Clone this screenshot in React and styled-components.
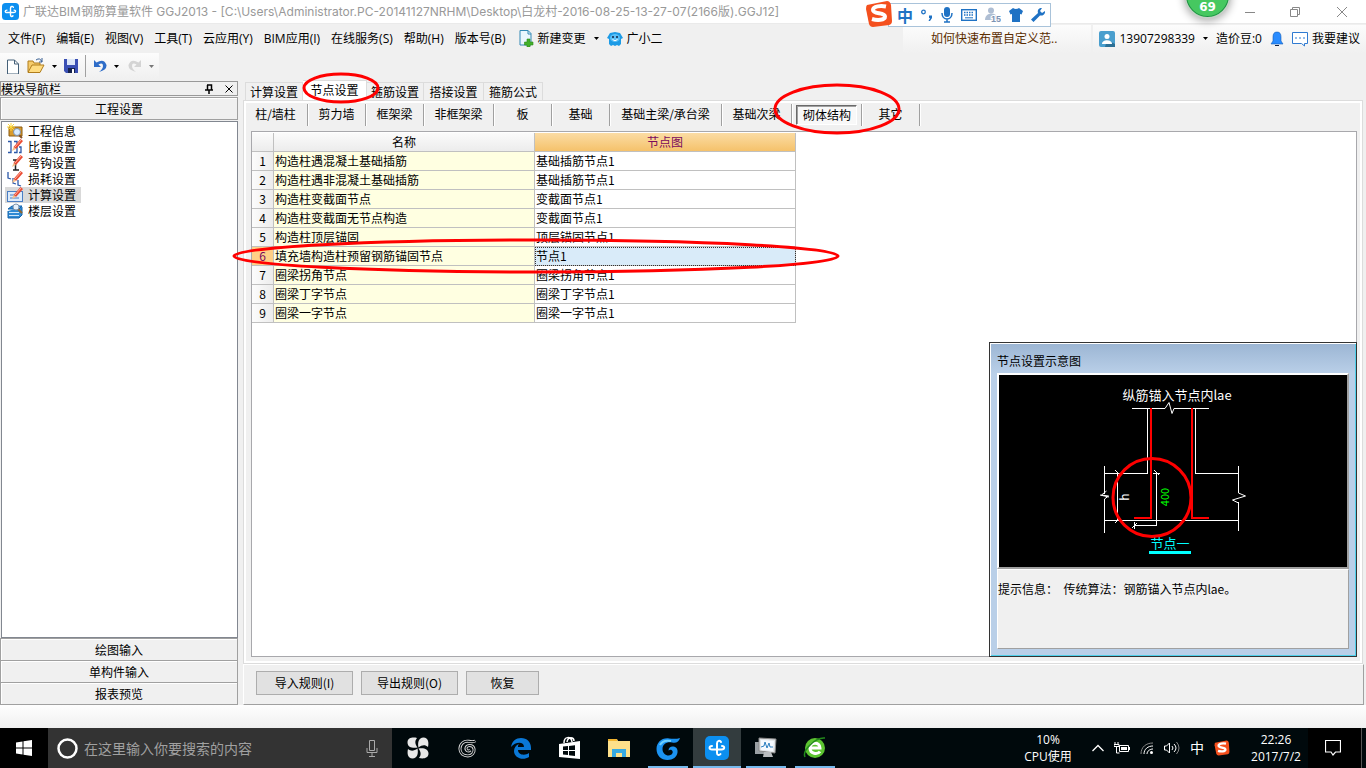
import React from "react";
import styled, { createGlobalStyle, css } from "styled-components";

const SONG = '"Noto Sans CJK SC", "Liberation Sans", sans-serif';
const UI = '"Open Sans", "Noto Sans CJK SC", sans-serif';

const Global = createGlobalStyle`
  *, *::before, *::after { box-sizing: border-box; }
  body { margin: 0; background: #f0f0f0; font: 12px/16px ${SONG}; color: #000; }
  button, input { font: inherit; color: inherit; margin: 0; padding: 0; border: 0; background: none; border-radius: 0; white-space: nowrap; }
  svg { display: block; flex: none; }
`;

const Page = styled.div`
  position: relative;
  display: flex;
  flex-direction: column;
  min-height: 100vh;
  overflow: hidden;
`;

/* ---------- title bar ---------- */
const TitleBar = styled.header`
  display: flex;
  align-items: center;
  height: 23px;
  padding: 0 18px 0 2px;
  background: #fff;
`;
const Title = styled.h1`
  flex: 1;
  margin: 0 0 0 4px;
  font-family: Inter, "Noto Sans CJK SC", sans-serif;
  font-size: 12px;
  font-weight: 400;
  line-height: 20px;
  color: #999;
  white-space: nowrap;
`;
const WindowButtons = styled.div`
  display: flex;
  gap: 30px;
`;
const IconButton = styled.button`
  display: flex;
  align-items: center;
  justify-content: center;
  gap: 4px;
`;
const Ball = styled.div`
  position: absolute;
  top: -28px;
  right: 135px;
  width: 47px;
  height: 47px;
  padding-top: 25px;
  border: 2px solid #c9cfc9;
  border-radius: 50%;
  background: #46c860;
  box-shadow: inset 0 0 0 1px #1f8f45, 0 2px 8px #0005;
  color: #fff;
  font: bold 12px/16px "DejaVu Sans", sans-serif;
  text-align: center;
`;
const ImeBar = styled.div`
  position: absolute;
  top: 3px;
  right: 315px;
  display: flex;
  align-items: center;
  gap: 8px;
  height: 24px;
  padding: 0 5px 0 8px;
  border: 1px solid #a9c3da;
  background: #fff;
  color: #1f72c4;
  font-size: 16px;
  font-weight: 700;
`;
const ImeLogo = styled.div`
  position: absolute;
  left: -24px;
  top: -4px;
`;

/* ---------- menu and tool bar ---------- */
const MenuBar = styled.nav`
  display: flex;
  align-items: center;
  height: 30px;
  padding-left: 8px;
  border-top: 1px solid #eaeaea;
  font-family: ${UI};
`;
const MenuItems = styled.div`
  display: flex;
  align-items: center;
  gap: 11px;
`;
const MenuExtras = styled.div`
  display: flex;
  flex: 1;
  align-items: center;
  gap: 8px;
  margin-left: 13px;
`;
const AccountStrip = styled.div`
  display: flex;
  align-items: center;
  justify-content: ${(p) => (p.$end ? "flex-end" : "flex-start")};
  gap: 8px;
  width: ${(p) => p.$w}px;
  height: 28px;
  padding: 0 6px;
  margin-left: 2px;
  background: linear-gradient(#fcfcfc, #f0f0f0);
`;
const HelpLink = styled.a`
  margin-left: 22px;
  color: #5b2e00;
  text-decoration: none;
`;
const ToolBar = styled.div`
  display: flex;
  align-items: center;
  align-self: flex-start;
  gap: 7px;
  height: 26px;
  padding: 0 5px;
  background: linear-gradient(#fcfcfc, #f0f0f0);
`;
const Divider = styled.span`
  width: 1px;
  height: 22px;
  background: #a0a0a0;
`;

/* ---------- left panel ---------- */
const Main = styled.main`
  display: flex;
  flex: 1;
  gap: 5px;
  padding-right: 2px;
`;
const Side = styled.aside`
  display: flex;
  flex-direction: column;
  width: 238px;
  padding-top: 2px;
`;
const SideHeader = styled.div`
  display: flex;
  align-items: center;
  justify-content: space-between;
  height: 15px;
  padding-right: 4px;
  margin-bottom: 1px;
  border: 1px solid #999;
`;
const SideTools = styled.div`
  display: flex;
  gap: 12px;
`;
const SideButton = styled.button`
  height: ${(p) => (p.$last ? 23 : 22)}px;
  border: 1px solid #a0a0a0;
  border-bottom-width: ${(p) => (p.$last ? 1 : 0)}px;
  box-shadow: inset 1px 1px #fff;
`;
const Tree = styled.ul`
  flex: 1;
  margin: 1px 0 0 1px;
  padding: 1px 3px;
  list-style: none;
  border: 1px solid #828790;
  background: #fff;
`;
const TreeItem = styled.li`
  display: flex;
  align-items: center;
  gap: 5px;
  width: 76px;
  height: 16px;
  padding-left: 2px;
  background: ${(p) => (p.$on ? "#d9d9d9" : "none")};
`;

/* ---------- work area ---------- */
const Work = styled.section`
  position: relative;
  display: flex;
  flex: 1;
  flex-direction: column;
  min-width: 0;
`;
const Tabs = styled.div`
  display: flex;
  align-items: flex-end;
  height: 21px;
  padding-left: 2px;
`;
const Tab = styled.button`
  width: ${(p) => p.$w}px;
  height: ${(p) => (p.$on ? 20 : 18)}px;
  padding-bottom: ${(p) => (p.$on ? 2 : 0)}px;
  border: 1px solid #dcdcdc;
  border-bottom: 0;
  border-left-width: 0;
  background: ${(p) => (p.$on ? "#fff" : "#f0f0f0")};
  &:first-child { border-left-width: 1px; }
`;
const Panel = styled.div`
  display: flex;
  flex: 1;
  flex-direction: column;
  margin-right: 1px;
  border: 1px solid #dcdcdc;
  background: #f0f0f0;
  box-shadow: inset 0 0 0 2px #fff;
  padding: 3px 5px 6px 7px;
`;
const SubTabs = styled.div`
  display: flex;
  height: 22px;
  margin: 0 0 5px -7px;
`;
const SubTab = styled.div`
  display: flex;
  width: ${(p) => p.$w}px;
  padding: 1px 4px 0;
  border-right: 1px solid #a0a0a0;
  box-shadow: 1px 0 #fff;
`;
const SubTabButton = styled.button`
  flex: 1;
  height: 20px;
  padding-bottom: 2px;
  ${(p) =>
    p.$on &&
    css`
      padding: 0 0 0 1px;
      border: 1px solid;
      border-color: #696969 #fff #fff #696969;
      background: #f8f8f8;
      box-shadow: inset 1px 1px #a0a0a0;
    `}
`;
const Sheet = styled.div`
  position: relative;
  flex: 1;
  padding-top: 1px;
  border: 1px solid #a8a8ac;
  background: #fff;
`;
const Grid = styled.table`
  width: 544px;
  table-layout: fixed;
  border-collapse: separate;
  border-spacing: 0;
`;
const Th = styled.th`
  height: 19px;
  padding: 0;
  line-height: 16px;
  font-weight: 400;
  border-right: 1px solid #c0c0c0;
  border-bottom: 1px solid #c0c0c0;
  background: ${(p) => (p.$on ? "linear-gradient(#fbdca4, #f5c26b)" : "linear-gradient(#fbfbfb, #ececec)")};
  color: ${(p) => (p.$on ? "#7a0a5c" : "#000")};
`;
const RowTh = styled(Th)`
  background: ${(p) => (p.$on ? "#ffcf86" : "linear-gradient(90deg, #fcfcfc, #ececec)")};
`;
const Td = styled.td`
  height: 19px;
  padding: 0 1px;
  line-height: 16px;
  border-right: 1px solid #c0c0c0;
  border-bottom: 1px solid #c0c0c0;
  background: ${(p) => (p.$name ? "#ffffe1" : p.$on ? "#d9ebf9" : "#fff")};
  ${(p) => p.$on && css`outline: 1px dotted #333; outline-offset: -1px;`}
`;
const Footer = styled.div`
  display: flex;
  align-items: flex-start;
  gap: 8px;
  height: 41px;
  padding: 6px 12px;
  border: 1px solid;
  border-color: #fff #a0a0a0 #a0a0a0 #fff;
`;
const PushButton = styled.button`
  width: ${(p) => p.$w}px;
  height: 24px;
  border: 1px solid #adadad;
  background: #e1e1e1;
`;
const Marks = styled.svg`
  position: absolute;
  left: 0;
  top: 0;
  overflow: visible;
  pointer-events: none;
`;

/* ---------- floating diagram window ---------- */
const Float = styled.section`
  position: absolute;
  right: -1px;
  bottom: -1px;
  display: flex;
  flex-direction: column;
  width: 368px;
  height: 315px;
  padding: 7px;
  border: 1px solid #333;
  background: linear-gradient(#9bb5d3, #b9cfe8 30px);
  box-shadow: inset 1px 1px #fff, inset -1px -1px #4fd0ea;
`;
const FloatTitle = styled.h2`
  margin: 3px 0 4px;
  font-size: 12px;
  font-weight: 400;
  line-height: 16px;
`;
const Canvas = styled.div`
  height: 196px;
  border: 2px solid;
  border-color: #fff #a0a0a0 #a0a0a0 #fff;
  background: #000;
`;
const Hint = styled.p`
  flex: 1;
  margin: 0;
  padding: 11px 0;
  border: 1px solid;
  border-color: #fff #a0a0a0 #a0a0a0 #fff;
  background: #f0f0f0;
  white-space: pre;
`;

/* ---------- task bar ---------- */
const StatusBar = styled.div`
  height: 23px;
  background: linear-gradient(#fefefe, #f0f0f0);
`;
const TaskBar = styled.footer`
  display: flex;
  height: 40px;
  background: #00090c;
  color: #fff;
  font-family: ${UI};
`;
const StartButton = styled.button`
  display: flex;
  align-items: center;
  justify-content: center;
  width: 48px;
  background: #000;
`;
const Search = styled.label`
  display: flex;
  align-items: center;
  gap: 5px;
  width: 344px;
  padding: 0 14px 0 8px;
  background: #333;
`;
const SearchInput = styled.input`
  flex: 1;
  min-width: 0;
  height: 24px;
  font-size: 14px;
  outline: 0;
  &::placeholder { color: #a0a0a0; opacity: 1; }
`;
const Apps = styled.div`
  display: flex;
  flex: 1;
  gap: 1px;
  padding-left: 2px;
`;
const TaskButton = styled.button`
  display: flex;
  align-items: center;
  justify-content: center;
  width: 48px;
  margin-left: ${(p) => (p.$gap ? 5 : 0)}px;
  background: ${(p) =>
    p.$state === "active"
      ? "linear-gradient(#76b9ed, #76b9ed) bottom / 100% 2px no-repeat #333c3e"
      : p.$state === "open"
        ? "linear-gradient(#76b9ed, #76b9ed) bottom / 40px 2px no-repeat"
        : "none"};
`;
const Tray = styled.div`
  display: flex;
  align-items: center;
`;
const TrayText = styled.div`
  width: ${(p) => p.$w}px;
  font-size: 12px;
  line-height: 17px;
  text-align: center;
`;
const TrayIcons = styled.div`
  display: flex;
  align-items: center;
  gap: 10px;
  padding: 0 14px 0 17px;
  font-size: 14px;
  line-height: 20px;
`;
const Notice = styled.button`
  display: flex;
  align-items: center;
  justify-content: center;
  width: 54px;
  height: 40px;
  margin-right: 4px;
  padding-right: 3px;
  border-right: 1px solid #555;
  background: #000;
`;

/* ---------- drawings ---------- */
const Svg = ({ w = 16, h = w, vb, children, ...rest }) => (
  <svg width={w} height={h} viewBox={vb || `0 0 ${w} ${h}`} fill="none" aria-hidden="true" {...rest}>
    {children}
  </svg>
);
const Caret = ({ color = "#000" }) => (
  <Svg w={5} h={3}><path d="M0 0h5L2.500 3z" fill={color} /></Svg>
);
const AppLogo = ({ size }) => (
  <Svg w={size} vb="0 0 24 24">
    <rect width="24" height="24" rx="5" fill="#0c8ff0" />
    <path d="M16 6c-1-2-4-1.500-4 1.500V17c0 2.500 2.500 2.500 3.500 1M7 10c-3 0-3.500 3.500 0 3.500h9.500c3.500 0 3.500-3.500.5-3.500" stroke="#fff" strokeWidth="2" strokeLinecap="round" />
  </Svg>
);
const SogouS = ({ size }) => (
  <Svg w={size} vb="0 0 28 28">
    <path d="M2 5l20-4q3 0 4 4l1 16q0 3-3 4L8 27q-3 0-4-3L1 9q0-3 1-4z" fill="#f4501e" />
    <path d="M21 6.500c-5-1-13-.5-13 3.500 0 4.500 12 2 12 6.500 0 4-8 4-13 2.500" stroke="#fff" strokeWidth="4" />
  </Svg>
);
const Pen = () => (
  <g><path d="M13.500 0l2.500 2-7 8-2.500-2z" fill="#ea4a32" /><path d="M14 1l-6 7" stroke="#ffb09c" /><path d="M6.500 8L9 10l-4 2z" fill="#f5c08a" /></g>
);
const treeIcons = {
  info: <><path d="M2 4h13v9H2z" fill="#d99b2b" stroke="#8a5a12" /><path d="M4 0v8M0 4h8M1 1l6 6M7 1L1 7" stroke="#ffd83a" /><path d="M12 12l3 3" stroke="#875222" strokeWidth="2" /><circle cx="10" cy="9" r="3.500" fill="#d8ecff" stroke="#7c8fa8" /></>,
  weight: <><path d="M1 2.500h3v11H1M7 2.500h3v11H7M12 8h2v5.500h-2" stroke="#2c58a8" strokeWidth="1.300" /><Pen /></>,
  hook: <><path d="M6 5h5M8.500 5v10M6 15h6" stroke="#222" strokeWidth="1.500" /><Pen /></>,
  loss: <><path d="M1 1v6l3 1M6 7v5l3 1M11 9v5l3 1" stroke="#2c58a8" strokeWidth="1.300" /><Pen /></>,
  calc: <><rect x=".5" y="4.500" width="15" height="10" fill="#dcebfb" stroke="#4a7ec4" /><path d="M3 8h4M3 11h9" stroke="#4a7ec4" /><Pen /></>,
  floor: <><path d="M1 6l4-3h10l-3 3zM1 8v7h11l3-3V4" fill="#2f8ad4" stroke="#1464ad" /><path d="M2 9.500h10M2 12.500h10" stroke="#cfe8fb" /><path d="M11 6l4 4" stroke="#8d6632" strokeWidth="2" /><circle cx="9" cy="4" r="3" fill="#e6f1fb" stroke="#7e94ab" /></>,
};

const Diagram = () => (
  <svg width="348" height="192" viewBox="0 0 348 192" fill="none" role="img" aria-label="节点设置示意图">
    <g stroke="#fff" shapeRendering="crispEdges">
      <path d="M133 33.500h33M175 33.500h35M148.500 33v65M105 98.500h44M196.500 33v65M196 98.500h43M105 145.500h134M105.500 91v28M105.500 124v34M239.500 91v27M239.500 127v29" />
      <path d="M118.500 97v48M157.500 97v54M135 150.500h22M115 98.500h7M154 98.500h7M135.500 147v7M115 145.500h7" />
    </g>
    <path d="M166 33.500l4-6 3 11 2-5M105.500 124l4-3-7-1 5-4M101 120l9 2M239.500 118l7 3-13 4 6 3M116 95l5 5M155 95l5 5M116 148l5-5M133 153l5-5" stroke="#fff" />
    <path d="M152 33v110h-17M193 33v110h17" stroke="#f00" strokeWidth="2" />
    <g fontFamily={SONG} textAnchor="middle">
      <text x="178" y="25" fontSize="13" fill="#fff">纵筋锚入节点内lae</text>
      <text x="171" y="173" fontSize="13" fill="#0ff">节点一</text>
      <text transform="translate(130 122) rotate(-90)" fontSize="12" fill="#fff">h</text>
      <text transform="translate(170 122) rotate(-90)" fontSize="11" fill="#0f0">400</text>
    </g>
    <path d="M150 177.500h42" stroke="#0ff" strokeWidth="3" />
    <circle cx="153" cy="122.500" r="39" stroke="#f00" strokeWidth="3" />
  </svg>
);

const menus = ["文件(F)", "编辑(E)", "视图(V)", "工具(T)", "云应用(Y)", "BIM应用(I)", "在线服务(S)", "帮助(H)", "版本号(B)"];
const tree = [["info", "工程信息"], ["weight", "比重设置"], ["hook", "弯钩设置"], ["loss", "损耗设置"], ["calc", "计算设置"], ["floor", "楼层设置"]];
const tabs = [["计算设置", 58], ["节点设置", 64], ["箍筋设置", 57], ["搭接设置", 60], ["箍筋公式", 59]];
const subTabs = [["柱/墙柱", 64], ["剪力墙", 58], ["框架梁", 58], ["非框架梁", 70], ["板", 58], ["基础", 58], ["基础主梁/承台梁", 112], ["基础次梁", 70], ["砌体结构", 70], ["其它", 58]];
const rows = [
  ["构造柱遇混凝土基础插筋", "基础插筋节点1"],
  ["构造柱遇非混凝土基础插筋", "基础插筋节点1"],
  ["构造柱变截面节点", "变截面节点1"],
  ["构造柱变截面无节点构造", "变截面节点1"],
  ["构造柱顶层锚固", "顶层锚固节点1"],
  ["填充墙构造柱预留钢筋锚固节点", "节点1"],
  ["圈梁拐角节点", "圈梁拐角节点1"],
  ["圈梁丁字节点", "圈梁丁字节点1"],
  ["圈梁一字节点", "圈梁一字节点1"],
];
const SWIRL = "M22 3.500c-2 1.500-5 1-8 .5C8 3 3.500 7.500 3.500 13S8 21.500 13 21.500s8-4 7.500-8c-.5-3-3-4.500-5.500-4.500-4 0-5.500 4-3 6 1.500 1 3 .5 4-.5";

const taskApps = [
  { name: "四叶草", icon: <Svg w={22}><g fill="#e8e8e8"><path d="M10.500 10.500C6 11.500.500 10.500.500 5.500S6 0 10 1c-2.500 3-2 6 .5 9.500z" /><path d="M11.500 10.500C10.500 6 11.500.500 16.500.500S22 6 21 10c-3-2.500-6-2-9.500.5z" /><path d="M11.500 11.500c4.500-1 10 0 10 5S16 22 12 21c2.500-3 2-6-.5-9.500z" /><path d="M10.500 11.500c1 4.500 0 10-5 10S0 16 1 12c3 2.500 6 2 9.500-.5z" /></g></Svg> },
  { name: "浏览助手", icon: <Svg w={20} vb="0 0 24 24"><path d={SWIRL} stroke="#d8d8d8" strokeWidth="3.600" /><path d={SWIRL} stroke="#00090c" strokeWidth="1.400" /></Svg> },
  { name: "Edge", gap: true, icon: <Svg w={20} h={21}><path d="M0 9C1 3 5 0 10 0c6 0 10 4 10 10v2H7c0 5 7 6 11 3v4c-6 4-15 1-15-6 0-3 2-6 5-7-1 1-1 2-1 3h6c0-6-9-5-13 0z" fill="#0a78d7" /></Svg> },
  { name: "应用商店", icon: <Svg w={22} h={24}><path d="M0 8l21-3v18L0 21z" fill="#fff" /><path d="M5 7c0-7 7-7 8-1M8 6c1-6 7-5 7-1" stroke="#fff" strokeWidth="1.500" /><path d="M4 10.500l5-.5v4H4zM10 10l6-.8V14h-6zM4 15h5v4l-5-.5zM10 15h6v5l-6-.8z" fill="#00090c" /></Svg> },
  { name: "文件资源管理器", icon: <Svg w={22} h={19}><path d="M0 0h9l1 2h12v16H0z" fill="#fde08a" /><path d="M0 0h9v2H0z" fill="#f2b530" /><path d="M4 18v-8h14v8h-4v-4H8v4z" fill="#36a9e1" /></Svg> },
  { name: "广联达", state: "open", icon: <Svg w={24}><path d="M24 2c-1 4-4 5.500-8 4.500-5-1-9.500 1.500-9.500 6.500 0 4 3 6.500 6 6.500 4 0 5.500-4 3-5.500-1-.5-2 0-3 .5 0-3 2.500-4.500 5-4 3 .5 4.500 3 4 6-.5 4.500-4.500 7.500-10 7.500C5 24 .5 19.500.5 13S6 1.500 13 2.500c4 .5 8 .5 11-.5z" fill="#1b93f2" /><path d="M4 9c2-4 6-5 11-4" stroke="#6fd0ff" strokeWidth="2" /></Svg> },
  { name: "钢筋算量", state: "active", icon: <AppLogo size={24} /> },
  { name: "性能监视", state: "open", icon: <Svg w={22} h={22}><path d="M0 5h9v12H0z" fill="#9aa0a4" /><path d="M4 1l17 1-1 14-16-2z" fill="#dfe3e6" stroke="#888" /><path d="M6 3l13 1-1 10-12-1z" fill="#f4f9ff" /><path d="M6 10l3-1 1-4 2 6 2-5 1 4h3" stroke="#2c7fc0" /><path d="M9 15h7l2 5H8z" fill="#b9bdc0" /></Svg> },
  { name: "浏览器", state: "open", icon: <Svg w={24}><circle cx="12" cy="12" r="10" fill="#5cc431" /><path d="M17 15.500c-2.500 3.500-10 2.500-10-3.500s10-6.500 10 0H8" stroke="#fff" strokeWidth="3" /><path d="M2 21C-1 15 12 1 22 2" stroke="#238a1c" strokeWidth="1.500" /></Svg> },
];

export default function App() {
  return (
    <Page>
      <Global />
      <TitleBar>
        <AppLogo size={17} />
        <Title>广联达BIM钢筋算量软件 GGJ2013 - [C:\Users\Administrator.PC-20141127NRHM\Desktop\白龙村-2016-08-25-13-27-07(2166版).GGJ12]</Title>
        <WindowButtons>
          <IconButton aria-label="最小化"><Svg w={16} h={12}><path d="M1 6.500h10" stroke="#888" /></Svg></IconButton>
          <IconButton aria-label="还原"><Svg w={16} h={12}><path d="M.5 3.500h7v7h-7zM2.500 3V1.500h7v7H8" stroke="#888" /></Svg></IconButton>
          <IconButton aria-label="关闭"><Svg w={12} h={12}><path d="M1 1l10 10M11 1L1 11" stroke="#888" /></Svg></IconButton>
        </WindowButtons>
      </TitleBar>

      <MenuBar>
        <MenuItems>
          {menus.map((m) => <button key={m}>{m}</button>)}
        </MenuItems>
        <MenuExtras>
          <IconButton>
            <Svg w={15} h={17}><path d="M1 .5h8l3 3V15H1z" fill="#eaf6fd" stroke="#3388b5" /><path d="M9 .5V4h3" stroke="#3388b5" /><path d="M8 9h3v3h3v3h-3v2H8v-2H5.500v-3H8z" fill="#43b02a" stroke="#2c8a1c" strokeWidth=".6" /></Svg>
            新建变更
          </IconButton>
          <Caret />
          <IconButton>
            <Svg w={16} h={16}><path d="M3 2l5-1 5 1 3 5-2 1v5l-2 2-2-1-2 1-2-1-2 1-2-2V8L0 7z" fill="#1d9be6" /><ellipse cx="8" cy="7" rx="5" ry="4" fill="#5cc0f7" /><circle cx="6" cy="6" r="1" fill="#124" /><circle cx="10" cy="6" r="1" fill="#124" /><path d="M5.500 8.500q2.500 2.500 5 0" stroke="#fff" /></Svg>
            广小二
          </IconButton>
        </MenuExtras>
        <AccountStrip $w={188}><HelpLink href="#help">如何快速布置自定义范..</HelpLink></AccountStrip>
        <AccountStrip $w={273} $end>
          <IconButton>
            <Svg w={16}><rect width="16" height="16" rx="2" fill="#4a9fce" /><path d="M8 9l8 4v3H6z" fill="#2c7096" /><circle cx="8" cy="5.500" r="2.500" fill="#fff" /><path d="M3 13c0-5 10-5 10 0z" fill="#fff" /></Svg>
            13907298339
          </IconButton>
          <Caret />
          <button>造价豆:0</button>
          <IconButton aria-label="通知"><Svg w={14} h={16}><path d="M7 1c3 0 4 2 4 5v4l2 3H1l2-3V6c0-3 1-5 4-5z" fill="#2a8cff" stroke="#155fb8" strokeWidth=".6" /><path d="M5 14.500h4" stroke="#124" /></Svg></IconButton>
          <IconButton>
            <Svg w={16}><path d="M.5 1.500h15v11h-3v2.500l-3-2.500h-9z" fill="#fff" stroke="#2f7ad1" /><path d="M3 7h10" stroke="#2f7ad1" strokeDasharray="2 2" /></Svg>
            我要建议
          </IconButton>
        </AccountStrip>
      </MenuBar>

      <ToolBar>
        <IconButton aria-label="新建"><Svg w={15}><path d="M2.500 1h7l4 4v10h-11z" fill="#fff" stroke="#456078" /><path d="M9.500 1v4h4" stroke="#456078" /></Svg></IconButton>
        <IconButton aria-label="打开"><Svg w={18}><path d="M1 15V4h5l1 2h6v3" fill="#f6cc6b" stroke="#b07d1c" /><path d="M1 15.500L5 8h12l-4 7.500z" fill="#ffdc80" stroke="#b07d1c" /><path d="M9 3q4-3 6 2M15 1v4h-3" stroke="#385f92" /></Svg></IconButton>
        <Caret />
        <IconButton aria-label="保存"><Svg w={14}><path d="M0 0h14v14H2l-2-2z" fill="#3b50b4" /><path d="M3 0h8v6H3z" fill="#dde7f8" /><path d="M4 9h7v5H4z" fill="#15224c" /><path d="M8 10h2v4H8z" fill="#fff" /></Svg></IconButton>
        <Divider />
        <IconButton aria-label="撤销"><Svg w={14}><path d="M1 1v7h7L5.500 5.500Q10 3 10 7q0 3-4 6 8-2 7.500-7Q11-1 3.500 3.500z" fill="#2f6dc8" /></Svg></IconButton>
        <Caret />
        <IconButton aria-label="重做"><Svg w={16} h={14}><path d="M15 1v7H8l2.500-2.500Q6 3 6 7q0 3 4 6-8-2-7.500-7Q5-1 12.500 3.500z" fill="#d4d4d4" /></Svg></IconButton>
        <Caret color="#777" />
      </ToolBar>

      <Main>
        <Side>
          <SideHeader>
            模块导航栏
            <SideTools>
              <IconButton aria-label="固定"><Svg w={8} h={10}><path d="M2 1h4.500v4.500M2.500 1v5M0 6h8M4 6v4" stroke="#000" strokeWidth="1.500" /></Svg></IconButton>
              <IconButton aria-label="关闭"><Svg w={8} h={8}><path d="M.5.5l7 7M7.500.5l-7 7" stroke="#000" /></Svg></IconButton>
            </SideTools>
          </SideHeader>
          <SideButton $last>工程设置</SideButton>
          <Tree>
            {tree.map(([icon, label]) => (
              <TreeItem key={label} $on={icon === "calc"}><Svg w={16}>{treeIcons[icon]}</Svg>{label}</TreeItem>
            ))}
          </Tree>
          <SideButton>绘图输入</SideButton>
          <SideButton>单构件输入</SideButton>
          <SideButton $last>报表预览</SideButton>
        </Side>

        <Work>
          <Tabs>
            {tabs.map(([label, w], i) => <Tab key={label} $w={w} $on={i === 1}>{label}</Tab>)}
          </Tabs>
          <Panel>
            <SubTabs>
              {subTabs.map(([label, w]) => (
                <SubTab key={label} $w={w}><SubTabButton $on={label === "砌体结构"}>{label}</SubTabButton></SubTab>
              ))}
            </SubTabs>
            <Sheet>
              <Grid>
                <colgroup><col width="22" /><col width="261" /><col width="261" /></colgroup>
                <thead><tr><Th aria-label="序号" /><Th>名称</Th><Th $on>节点图</Th></tr></thead>
                <tbody>
                  {rows.map(([name, node], i) => (
                    <tr key={name}><RowTh $on={i === 5}>{i + 1}</RowTh><Td $name>{name}</Td><Td $on={i === 5}>{node}</Td></tr>
                  ))}
                </tbody>
              </Grid>
              <Float>
                <FloatTitle>节点设置示意图</FloatTitle>
                <Canvas><Diagram /></Canvas>
                <Hint>提示信息：  传统算法：钢筋锚入节点内lae。</Hint>
              </Float>
            </Sheet>
          </Panel>
          <Footer>
            <PushButton $w={97}>导入规则(I)</PushButton>
            <PushButton $w={97}>导出规则(O)</PushButton>
            <PushButton $w={73}>恢复</PushButton>
          </Footer>
          <Marks width="660" height="200" fill="none" stroke="#f00" strokeWidth="3" aria-hidden="true">
            <ellipse cx="98" cy="9" rx="37" ry="14" />
            <ellipse cx="594" cy="30" rx="62" ry="24" />
            <ellipse cx="293" cy="177" rx="302" ry="16" />
          </Marks>
        </Work>
      </Main>

      <StatusBar />
      <TaskBar>
        <StartButton aria-label="开始"><Svg w={16}><path d="M0 2.500l6.500-1v6H0zM7.500 1.300L16 0v7.500H7.500zM0 8.500h6.500v6l-6.500-1zM7.500 8.500H16V16l-8.500-1.300z" fill="#fff" /></Svg></StartButton>
        <Search>
          <Svg w={23}><circle cx="11.500" cy="11.500" r="9" stroke="#fff" strokeWidth="2.500" /></Svg>
          <SearchInput aria-label="搜索" placeholder="在这里输入你要搜索的内容" />
          <Svg w={12} h={17}><path d="M3.500.5h5v10h-5zM1 8v4.500h10V8M6 12.500V16M3 16.500h6" stroke="#aaa" /></Svg>
        </Search>
        <Apps>
          {taskApps.map((a) => <TaskButton key={a.name} aria-label={a.name} $state={a.state} $gap={a.gap}>{a.icon}</TaskButton>)}
        </Apps>
        <Tray>
          <TrayText $w={54}>10%<br />CPU使用</TrayText>
          <TrayIcons>
            <Svg w={12} h={8}><path d="M.5 7L6 1.500 11.500 7" stroke="#fff" strokeWidth="1.300" /></Svg>
            <Svg w={16} h={12}><path d="M5.500 3.500h9v6h-9z" stroke="#fff" /><path d="M7 5h6v3H7zM14 5h2v3h-2z" fill="#fff" /><path d="M1 0v2M4 0v2M0 2.500h5v2H0zM2.500 4v7h3" stroke="#fff" /></Svg>
            <Svg w={14} h={14}><path d="M1 13C1 6 6 2 13 2" stroke="#888" /><path d="M4 13c0-5 4-8 9-8M7 13c0-3 3-5 6-5" stroke="#fff" /><circle cx="11.500" cy="11.500" r="1.500" fill="#fff" /></Svg>
            <Svg w={16} h={12}><path d="M.5 4h2l3-3v10l-3-3h-2z" stroke="#fff" /><path d="M8 4q2 2 0 4M10 2q4 4 0 8" stroke="#fff" /><path d="M12.500 0q5 6 0 12" stroke="#888" /></Svg>
            中
            <SogouS size={16} />
          </TrayIcons>
          <TrayText $w={64}>22:26<br />2017/7/2</TrayText>
          <Notice aria-label="操作中心"><Svg w={16} h={16}><path d="M.5.5h15v11.500h-5L8 15l-2-3H.5z" stroke="#fff" strokeWidth="1.200" /></Svg></Notice>
        </Tray>
      </TaskBar>

      <ImeBar>
        <ImeLogo><SogouS size={28} /></ImeLogo>
        中
        <Svg w={12} h={14}><circle cx="2.500" cy="4" r="1.800" stroke="#1f72c4" strokeWidth="1.300" /><path d="M8 7.500h3V10l-2 3H7.500L9 10H8z" fill="#1f72c4" /></Svg>
        <Svg w={12} h={16}><rect x="3" width="6" height="10" rx="3" fill="#1f72c4" /><path d="M1 6c0 8 10 8 10 0M6 12v3M3 15h6" stroke="#1f72c4" strokeWidth="1.500" /></Svg>
        <Svg w={16} h={12}><rect x=".7" y=".7" width="14.600" height="10.600" stroke="#1f72c4" strokeWidth="1.400" /><path d="M3 3.500h10M3 6h10" stroke="#1f72c4" strokeWidth="1.500" strokeDasharray="1.500 1" /><path d="M4 8.800h8" stroke="#1f72c4" /></Svg>
        <Svg w={16} h={16}><circle cx="6" cy="3.500" r="3" fill="#afbed3" /><path d="M0 13c0-8 11-8 12-3v3z" fill="#afbed3" /><text x="6" y="15" fontSize="9" fontWeight="700" fontFamily="Liberation Sans" fill="#7d93b3" stroke="#fff" strokeWidth="2" paintOrder="stroke">15</text></Svg>
        <Svg w={14} h={14}><path d="M4 0q3 2 6 0l4 3-1.500 3.500L11 6v8H3V6l-1.500.5L0 3z" fill="#1f72c4" /></Svg>
        <Svg w={14} h={14}><path d="M14 3l-3 2-2-2 2-3C8-.5 6 2 7 5L0 11.500 2.500 14 9 7.500c3 .5 5.500-1.500 5-4.500z" fill="#1f72c4" /></Svg>
      </ImeBar>
      <Ball>69</Ball>
    </Page>
  );
}
